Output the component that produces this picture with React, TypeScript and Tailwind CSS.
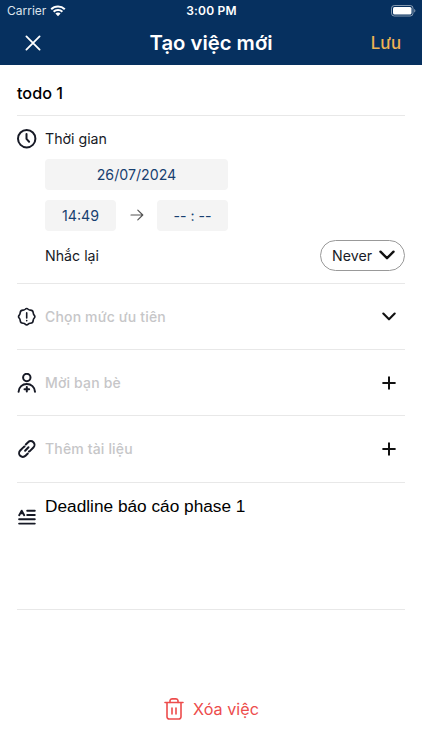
import type { ReactNode } from "react";

interface RowProps {
  icon: ReactNode;
  label: string;
  action: ReactNode;
}

function WifiIcon() {
  return (
    <svg className="h-3 w-4" viewBox="0 0 16 12" fill="currentColor">
      <path d="M8 .5C5 .5 2.400 1.600.5 3.400l1.400 1.500A9 9 0 0 1 8 2.500a9 9 0 0 1 6.100 2.400l1.400-1.500A11 11 0 0 0 8 .5Z" />
      <path d="M8 4a7.300 7.300 0 0 0-5.100 2l1.500 1.500A5.200 5.200 0 0 1 8 6.100c1.400 0 2.700.5 3.600 1.400L13.100 6A7.300 7.300 0 0 0 8 4Z" />
      <path d="M8 7.500c-1 0-1.900.4-2.600 1L8 11.300l2.600-2.800c-.7-.6-1.600-1-2.600-1Z" />
    </svg>
  );
}

function BatteryIcon() {
  return (
    <svg className="h-[12px] w-[25px]" viewBox="0 0 25 12" fill="none">
      <rect x="0.5" y="0.5" width="21.500" height="10.500" rx="2.800" stroke="white" strokeOpacity="0.5" />
      <rect x="2" y="2" width="18.500" height="7.500" rx="1.500" fill="white" />
      <path d="M23.200 4v3.600c.7-.3 1.200-1 1.200-1.800s-.5-1.500-1.200-1.800Z" fill="white" fillOpacity="0.5" />
    </svg>
  );
}

function ClockIcon() {
  return (
    <svg className="size-5" viewBox="0 0 20 20" fill="none" stroke="currentColor" strokeWidth={2} strokeLinecap="round" strokeLinejoin="round">
      <circle cx="9.700" cy="9.700" r="8.700" />
      <path d="M9.500 5v4.900l2.600 2.800" />
    </svg>
  );
}

function PriorityIcon() {
  return (
    <svg className="size-5" viewBox="0 0 20 20" fill="none" stroke="currentColor" strokeWidth={1.6} strokeLinecap="round" strokeLinejoin="round">
      <path d="M8.200 2.300Q9.700 .7 11.200 2.300Q12.100 3.200 13.400 3.100Q15.900 3.100 16.200 5.600Q16.200 7.100 17.100 8.100Q18.600 9.700 17.100 11.300Q16.200 12.300 16.200 13.700Q15.900 16.200 13.400 16.300Q12.100 16.200 11.200 17.100Q9.700 18.700 8.200 17.100Q7.300 16.200 6 16.300Q3.500 16.200 3.200 13.700Q3.200 12.300 2.300 11.300Q.8 9.700 2.300 8.100Q3.200 7.100 3.200 5.600Q3.500 3.100 6 3.100Q7.300 3.200 8.200 2.300Z" />
      <path d="M9.700 5.900v5M9.700 13.600v.1" />
    </svg>
  );
}

function InviteIcon() {
  return (
    <svg className="size-5" viewBox="0 0 20 20" fill="none" stroke="currentColor" strokeWidth={2} strokeLinecap="round">
      <circle cx="9.800" cy="4.500" r="3.700" />
      <path d="M1.600 18.700c.2-4.600 3.800-7.700 8.200-7.700s8 3.100 8.200 7.700" />
      <path d="M9.800 13.900v4.600M7.500 16.200h4.600" />
    </svg>
  );
}

function LinkIcon() {
  return (
    <svg className="size-5" viewBox="0 0 20 20" fill="none" stroke="currentColor" strokeWidth={2} strokeLinecap="round" strokeLinejoin="round">
      <path d="M8.800 5.500l2.300-2.300a3.700 3.700 0 0 1 5.300 5.300l-3.100 3.100a3.700 3.700 0 0 1-1.300.9" />
      <path d="M10.800 14.500l-2.300 2.300a3.700 3.700 0 0 1-5.300-5.300l3.100-3.100a3.700 3.700 0 0 1 1.300-.9" />
      <path d="M8.100 11.700l3.400-3.400" />
    </svg>
  );
}

function NoteIcon() {
  return (
    <svg className="h-4 w-[18px]" viewBox="0 0 18 16" fill="none" stroke="currentColor" strokeWidth={1.9} strokeLinecap="round" strokeLinejoin="round">
      <path d="M1.200 6.200L3.700 1.700L6.200 6.200M2.800 4.400h1.900" />
      <path d="M9.200 1.700h7.600M9.200 6h7.600M1.100 10.300h15.700M1.100 14.600h15.700" />
    </svg>
  );
}

function TrashIcon() {
  return (
    <svg className="h-6 w-5" viewBox="0 0 20 24" fill="none" stroke="currentColor" strokeWidth={1.6} strokeLinecap="round" strokeLinejoin="round">
      <path d="M1 5.500h18M3 5.500v14.300A2.200 2.200 0 0 0 5.200 22h9.600a2.200 2.200 0 0 0 2.200-2.200V5.500" />
      <path d="M6 5.500V3.700A2 2 0 0 1 8 1.900h4a2 2 0 0 1 2 1.800v1.800M8 11v6M12 11v6" />
    </svg>
  );
}

function ChevronIcon({ className }: { className: string }) {
  return (
    <svg className={className} viewBox="0 0 16 10" fill="none" stroke="currentColor" strokeWidth={2.4} strokeLinecap="round" strokeLinejoin="round">
      <path d="M1.500 1.700L8 8.200l6.500-6.500" />
    </svg>
  );
}

function PlusIcon() {
  return (
    <svg className="size-[14px]" viewBox="0 0 14 14" fill="none" stroke="currentColor" strokeWidth={2}>
      <path d="M7 .4v13.200M.4 7h13.200" />
    </svg>
  );
}

function OptionRow({ icon, label, action }: RowProps) {
  return (
    <button className="flex h-[66.200px] w-full items-center border-b border-[#e8e8e8] pr-[9px] text-left">
      <span className="flex w-7 shrink-0">{icon}</span>
      <span className="flex-1 pb-px text-[14px] font-medium tracking-[0.160px] text-[#c6c6c8]">{label}</span>
      <span className="text-[#111]">{action}</span>
    </button>
  );
}

export default function App() {
  return (
    <div className="flex h-[750px] w-[422px] flex-col bg-white font-['Inter',sans-serif] text-[#171a26]">
      <header className="h-[65.400px] bg-[#06305f] text-white">
        <div className="grid h-[22px] grid-cols-3 items-center pr-[6px] pl-[7px] text-[12px]">
          <div className="flex items-center gap-[4px] text-[#dce3eb]">
            <span className="text-[12px]">Carrier</span>
            <span className="text-white">
              <WifiIcon />
            </span>
          </div>
          <span className="text-center font-semibold tracking-[0.2px]">3:00 PM</span>
          <span className="flex justify-end">
            <BatteryIcon />
          </span>
        </div>
        <div className="grid h-[42px] grid-cols-[80px_1fr_80px] items-center px-[21px]">
          <button aria-label="Close" className="pl-1">
            <svg className="size-4" viewBox="0 0 16 16" fill="none" stroke="currentColor" strokeWidth={1.8} strokeLinecap="round">
              <path d="M1.400 1.400l13.200 13.200M14.600 1.400L1.400 14.600" />
            </svg>
          </button>
          <h1 className="text-center text-[20.300px] font-semibold">Tạo việc mới</h1>
          <button className="pt-px text-right text-[16.800px] font-medium text-[#efb353]">Lưu</button>
        </div>
      </header>

      <main className="flex flex-1 flex-col px-[17px]">
        <div className="flex h-[50.600px] items-center border-b border-[#e8e8e8] pt-[5px] text-[16.200px] font-medium text-black">
          todo 1
        </div>

        {/* Time */}
        <section className="h-[168px] border-b border-[#e8e8e8] pt-[13px]">
          <div className="flex h-5 items-center text-[14.200px]">
            <span className="w-7">
              <ClockIcon />
            </span>
            Thời gian
          </div>
          <div className="mt-[10px] ml-7 w-[183px] text-[14.200px] text-[#173f70]">
            <div className="flex h-[31px] items-center justify-center rounded-[4px] bg-[#f4f4f4]">
              26/07/2024
            </div>
            <div className="mt-[10px] flex items-center justify-between">
              <div className="flex h-[31px] w-[71px] items-center justify-center rounded-[4px] bg-[#f4f4f4]">
                14:49
              </div>
              <svg className="h-3 w-[14px] text-[#555]" viewBox="0 0 14 12" fill="none" stroke="currentColor" strokeWidth={1.15} strokeLinecap="round" strokeLinejoin="round">
                <path d="M1 6h11.800M7.800 1.100l5 4.900-5 4.900" />
              </svg>
              <div className="flex h-[31px] w-[71px] items-center justify-center rounded-[4px] bg-[#f4f4f4]">
                -- : --
              </div>
            </div>
          </div>
          <div className="mt-[9px] flex items-center justify-between pl-7 text-[14.200px]">
            <span>Nhắc lại</span>
            <button className="flex h-[31px] w-[85px] items-center justify-between rounded-full border border-[#999] pr-[9px] pl-[11px]">
              Never
              <ChevronIcon className="h-[10px] w-4 text-[#111]" />
            </button>
          </div>
        </section>

        <OptionRow icon={<PriorityIcon />} label="Chọn mức ưu tiên" action={<ChevronIcon className="h-[9px] w-[14px]" />} />
        <OptionRow icon={<InviteIcon />} label="Mời bạn bè" action={<PlusIcon />} />
        <OptionRow icon={<LinkIcon />} label="Thêm tài liệu" action={<PlusIcon />} />

        {/* Description */}
        <section className="flex h-[127px] border-b border-[#e8e8e8]">
          <span className="w-7 pt-[26px] pl-px">
            <NoteIcon />
          </span>
          <p className="pt-[11.500px] font-['Liberation_Sans',sans-serif] text-[17.250px] leading-6 text-black">
            Deadline báo cáo phase 1
          </p>
        </section>

        <button className="mt-[87px] flex items-center justify-center gap-[9px] pl-px text-[16.200px] text-[#ed4c4c]">
          <TrashIcon />
          Xóa việc
        </button>
      </main>
    </div>
  );
}
